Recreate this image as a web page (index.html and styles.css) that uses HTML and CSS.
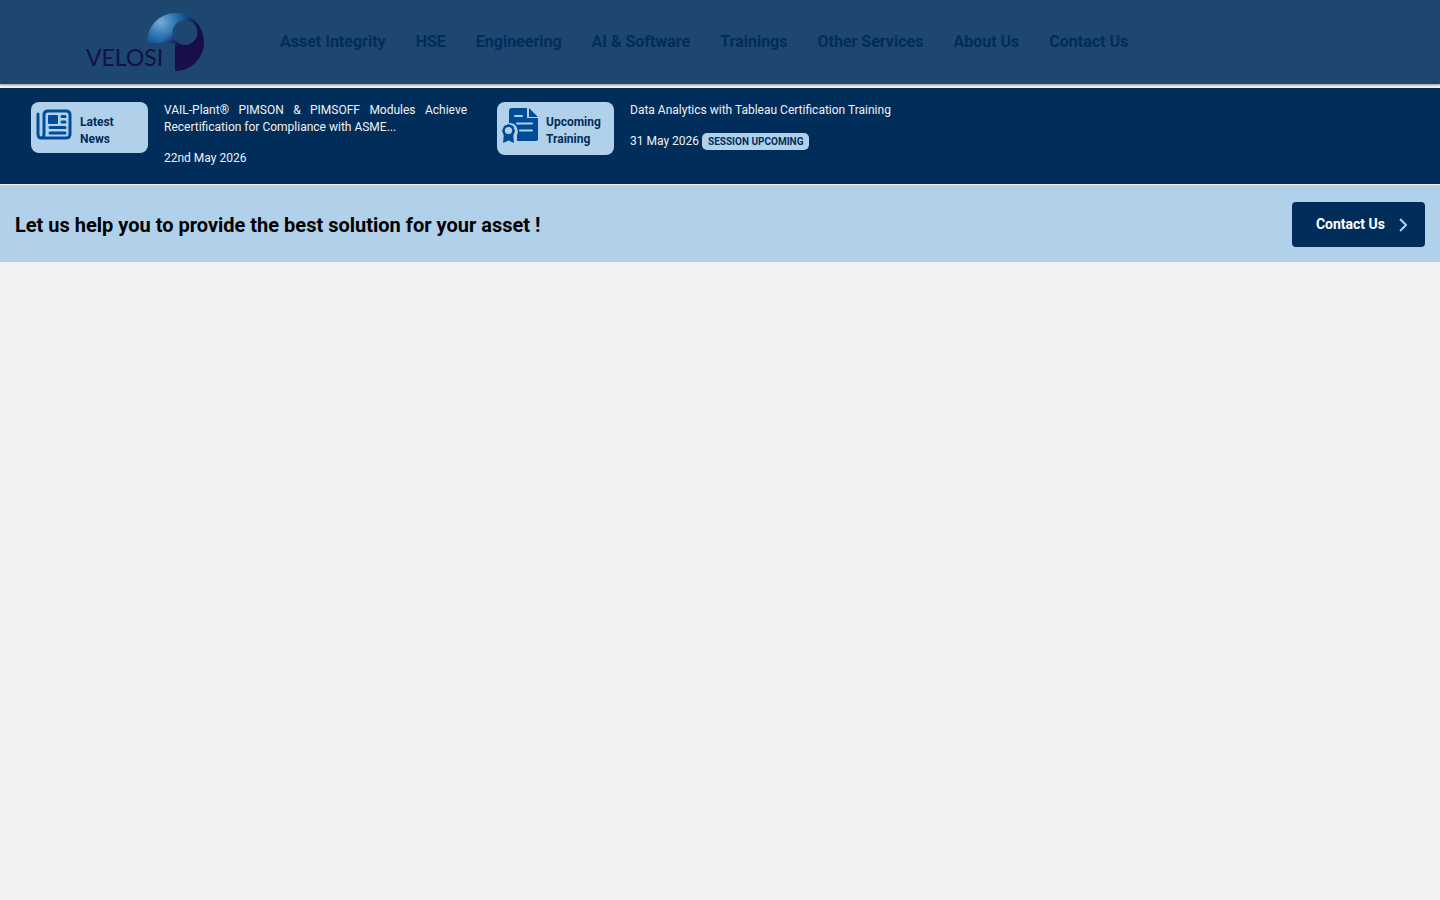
FILE: index.html
```
<!DOCTYPE html>
<html lang="en">
<head>
    <meta charset="UTF-8">
    <meta name="viewport" content="width=device-width, initial-scale=1">
    <title>Velosi</title>
    <link rel="stylesheet" href="styles.css">
</head>
<body>
<header class="header">
    <a class="logo" href="#" aria-label="Velosi">
        <svg width="120" height="60" viewBox="0 0 120 60">
            <defs>
                <radialGradient id="shine" gradientUnits="userSpaceOnUse" cx="76" cy="10" r="40">
                    <stop offset="0" stop-color="#78acd8"/>
                    <stop offset=".3" stop-color="#397fb9"/>
                    <stop offset=".6" stop-color="#114f94"/>
                    <stop offset="1" stop-color="#152a6c"/>
                </radialGradient>
                <linearGradient id="shade" gradientUnits="userSpaceOnUse" x1="86" y1="20" x2="102" y2="36">
                    <stop offset="0" stop-color="#160f49" stop-opacity="0"/>
                    <stop offset=".7" stop-color="#160f49"/>
                </linearGradient>
            </defs>
            <path fill="url(#shine)" fill-rule="evenodd" d="M62 31A28.500 29 0 0 1 90.500 1A28.500 29 0 0 1 119 30A28.500 29 0 0 1 90 59V31ZM112.500 20.500A12.500 12.500 0 1 0 87.500 20.500A12.500 12.500 0 1 0 112.500 20.500Z"/>
            <path fill="url(#shade)" fill-rule="evenodd" d="M62 31A28.500 29 0 0 1 90.500 1A28.500 29 0 0 1 119 30A28.500 29 0 0 1 90 59V31ZM112.500 20.500A12.500 12.500 0 1 0 87.500 20.500A12.500 12.500 0 1 0 112.500 20.500Z"/>
            <text class="logo-text" x="1" y="54">VELOSI</text>
        </svg>
    </a>
    <nav class="nav">
        <a href="#">Asset Integrity</a>
        <a href="#">HSE</a>
        <a href="#">Engineering</a>
        <a href="#">AI &amp; Software</a>
        <a href="#">Trainings</a>
        <a href="#">Other Services</a>
        <a href="#">About Us</a>
        <a href="#">Contact Us</a>
    </nav>
</header>

<section class="ticker">
    <div class="item">
        <div class="label">
            <svg class="icon" width="36" height="32" viewBox="0 0 36 32" fill="none" stroke="#004c97" stroke-width="3" stroke-linecap="round">
                <path d="M8 26V7Q8 3 12 3H30Q34 3 34 7V26Q34 30 30 30H5Q2 30 2 26V6M8 26Q8 30 5 30"/>
                <rect x="12" y="7" width="10" height="9" rx="1" fill="#004c97" stroke="none"/>
                <path d="M26 8.500h3M26 14h3M14 19.500h15M14 25h15"/>
            </svg>
            <h2>Latest<br>News</h2>
        </div>
        <div class="text">
            <p><a href="#">VAIL-Plant® PIMSON &amp; PIMSOFF Modules Achieve Recertification for Compliance with ASME...</a></p>
            <p>22nd May 2026</p>
        </div>
    </div>
    <div class="item">
        <div class="label">
            <svg class="icon" width="36" height="36" viewBox="0 0 36 36">
                <path fill="#004c97" d="M10 0H25V10H36V31Q36 33 33 33H15V27Q17 23 14 18Q12 15 7 15V3Q7 0 10 0ZM27 0L36 9H27Z"/>
                <path stroke="#b1d1ea" stroke-width="2" stroke-linecap="round" d="M13 8h7M15 15.500h15M18 22.500h12"/>
                <path fill="#004c97" d="M2 25L1 35L6.500 32.500L12 35L11 25Z"/>
                <path fill="#004c97" d="M6.500 16L9 17L11.500 18L12 20.500L13 23L12 25.500L11 28L8.500 28.500L6.500 30L4.500 28.500L2 28L1 25.500L0 23L1 20.500L2 18L4.500 17Z"/>
                <circle cx="6.500" cy="22.500" r="3.600" fill="#b1d1ea"/>
            </svg>
            <h2>Upcoming<br>Training</h2>
        </div>
        <div class="text">
            <p><a href="#">Data Analytics with Tableau Certification Training</a></p>
            <p>31 May 2026 <span class="badge">SESSION UPCOMING</span></p>
        </div>
    </div>
</section>

<section class="help">
    <h1>Let us help you to provide the best solution for your asset !</h1>
    <a class="contact" href="#">
        Contact Us
        <svg width="8" height="14" viewBox="0 0 8 14" fill="none" stroke="#b1d1ea" stroke-width="2">
            <path d="M1 1L7 7L1 13"/>
        </svg>
    </a>
</section>
</body>
</html>
```
FILE: styles.css
```
*{
    box-sizing: border-box;
    margin: 0;
    padding: 0;
}

body{
    font-family: Roboto, sans-serif;
    font-size: 12px;
    line-height: 17px;
    background: #f1f1f1;
}

a{
    color: inherit;
    text-decoration: none;
}

svg{
    display: block;
    flex-shrink: 0;
}

/* header */
.header{
    display: flex;
    align-items: center;
    gap: 75px;
    min-height: 84px;
    margin-bottom: 4px;
    padding: 0 85px;
    background: #1d476e;
    box-shadow: 0 1px 2px rgba(0, 0, 0, .4);
}
.logo-text{
    font-family: Lato, sans-serif;
    font-size: 23px;
    fill: #160f49;
}
.nav{
    display: flex;
    flex-wrap: wrap;
    gap: 0 30px;
    font-size: 16px;
    font-weight: 700;
    line-height: 24px;
    color: #002d5a;
}

/* news and training */
.ticker{
    display: grid;
    grid-template-columns: repeat(3, 1fr);
    margin-bottom: 1px;
    padding: 14px 26px 17px 16px;
    background: #002d5a;
    color: #f1f1f1;
}
.item{
    display: flex;
    align-items: flex-start;
    gap: 16px;
    padding: 0 15px;
}
.label{
    display: flex;
    flex-shrink: 0;
    gap: 8px;
    width: 117px;
    padding: 6px 5px 5px;
    border-radius: 8px;
    background: #b1d1ea;
    color: #002d5a;
}
.icon{
    margin-bottom: 6px;
}
.label h2{
    padding-top: 6px;
    font-size: 12px;
    font-weight: 700;
}
.text{
    flex: 1;
    text-align: justify;
}
.text p + p{
    margin-top: 14px;
}
.badge{
    display: inline-block;
    padding: 0 6px;
    border-radius: 5px;
    background: #b1d1ea;
    color: #002d5a;
    font-size: 10px;
    font-weight: 700;
}

/* contact bar */
.help{
    display: flex;
    align-items: center;
    justify-content: space-between;
    padding: 17px 15px 15px;
    background: #b1d1ea;
}
.help h1{
    font-size: 20px;
    line-height: 24px;
    color: #000;
}
.contact{
    display: flex;
    align-items: center;
    gap: 14px;
    padding: 14px 18px 14px 24px;
    border-radius: 4px;
    background: #002d5a;
    color: #fff;
    font-size: 14px;
    font-weight: 700;
}
```
